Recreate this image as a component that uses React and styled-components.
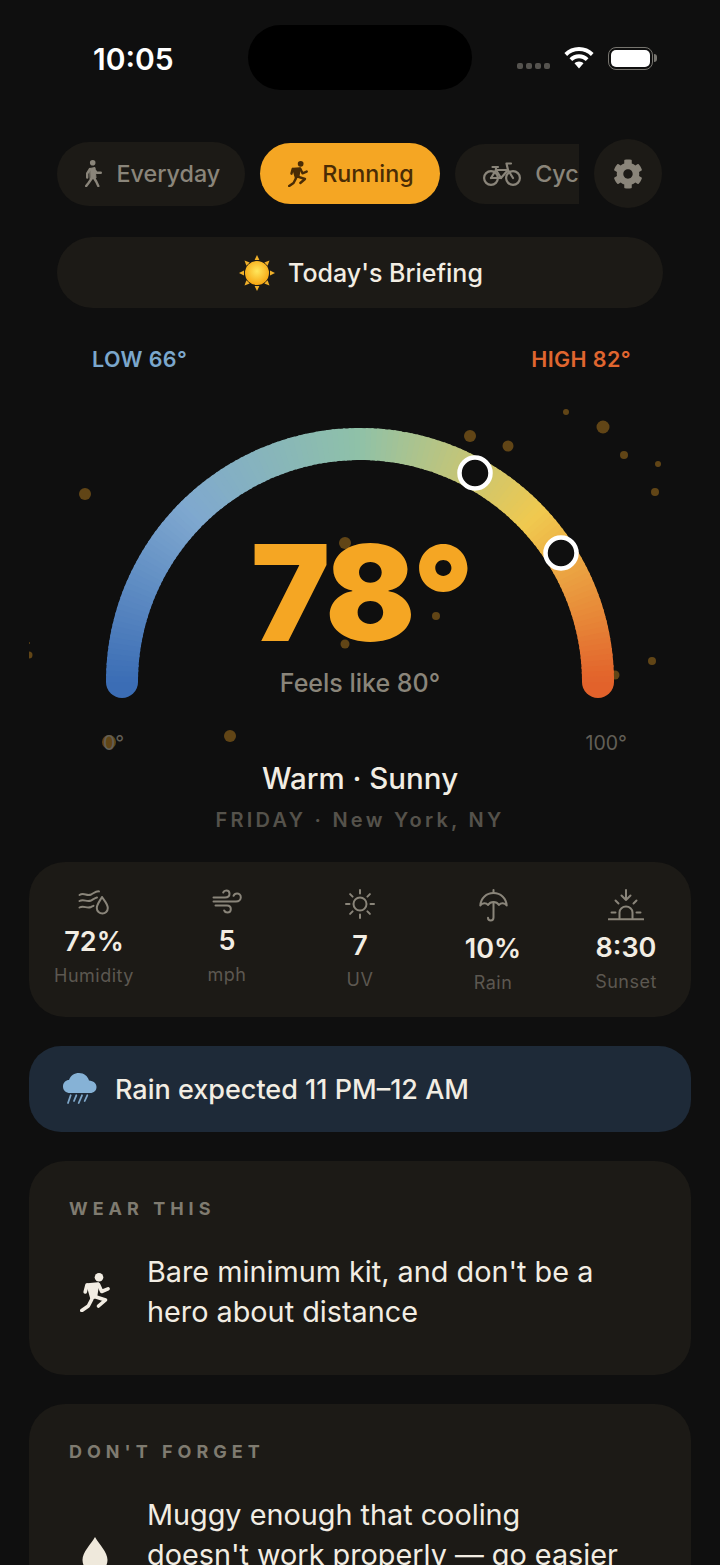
import React from "react";
import styled, { createGlobalStyle } from "styled-components";
import { FaCog } from "react-icons/fa";

const CREAM = "#f2ede3";
const CARD = "#1c1a16";
const MUTED = "#8a857a";
const AMBER = "#f5a623";

const GlobalStyle = createGlobalStyle`
  html, body {
    margin: 0;
    padding: 0;
    background: #0f0f0f;
  }
  body {
    width: 720px;
    height: 1565px;
    overflow: hidden;
    font-family: Inter, "Liberation Sans", sans-serif;
    color: ${CREAM};
  }
`;

// gauge colours from the left end to the right end of the arc
const STOPS = [
  [0, [59, 109, 181]],
  [0.25, [127, 168, 207]],
  [0.5, [143, 193, 168]],
  [0.76, [240, 201, 79]],
  [1, [226, 98, 43]],
];

const colourAt = (t) => {
  let i = 0;
  while (i < STOPS.length - 2 && t > STOPS[i + 1][0]) i++;
  const [t0, c0] = STOPS[i];
  const [t1, c1] = STOPS[i + 1];
  const k = (t - t0) / (t1 - t0);
  const mix = c0.map((c, n) => Math.round(c + (c1[n] - c) * k));
  return `rgb(${mix.join(",")})`;
};

const CX = 360;
const CY = 682;
const R = 238;

const pointAt = (t) => {
  const a = Math.PI * (1 - t);
  return [CX + R * Math.cos(a), CY - R * Math.sin(a)];
};

const SEGMENTS = Array.from({ length: 140 }, (_, i) => {
  const t0 = i / 140;
  const t1 = Math.min(1, (i + 1.4) / 140);
  const [x0, y0] = pointAt(t0);
  const [x1, y1] = pointAt(t1);
  return {
    d: `M${x0} ${y0}A${R} ${R} 0 0 1 ${x1} ${y1}`,
    colour: colourAt((t0 + t1) / 2),
  };
});

const SPECKS = [
  [470, 436, 6], [508, 446, 5.5], [566, 412, 3], [603, 427, 6.5], [624, 455, 4],
  [658, 464, 3], [655, 492, 4], [85, 494, 6], [345, 543, 6], [436, 616, 4],
  [345, 644, 4.5], [652, 661, 4], [615, 675, 4.5], [230, 736, 6], [109, 742, 7],
  [29, 655, 3.5], [29, 643, 1],
];

const Gauge = () => (
  <GaugeSvg viewBox="29 395 662 372" width="662" height="372">
    {SPECKS.map(([x, y, r]) => (
      <circle key={`${x}-${y}`} cx={x} cy={y} r={r} fill={AMBER} opacity="0.36" />
    ))}
    <circle cx={CX - R} cy={CY} r="16" fill={colourAt(0)} />
    <circle cx={CX + R} cy={CY} r="16" fill={colourAt(1)} />
    {SEGMENTS.map((s) => (
      <path key={s.d} d={s.d} fill="none" stroke={s.colour} strokeWidth="32" />
    ))}
    <circle cx="475" cy="473" r="15.5" fill="#0f0f0f" stroke="#fff" strokeWidth="4.5" />
    <circle cx="561" cy="553" r="15.5" fill="#0f0f0f" stroke="#fff" strokeWidth="4.5" />
  </GaugeSvg>
);

const WalkIcon = () => (
  <svg width="17" height="27" viewBox="0 0 17 27" fill="none" stroke="currentColor" strokeWidth="2.4" strokeLinecap="round" strokeLinejoin="round">
    <circle cx="7.7" cy="2.8" r="2.8" fill="currentColor" stroke="none" />
    <path d="M5 8.500L10 7.500L11 18L5.500 19Z" fill="currentColor" strokeWidth="1" />
    <path d="M10.500 11L11.500 12.700H15.800" />
    <path d="M5 9L2.200 13.500V17.500" />
    <path d="M7 18L3.500 23L1.200 26" />
    <path d="M9 18L11.200 21.500L13.300 26" />
  </svg>
);

const RunIcon = ({ size = 39 }) => (
  <svg width={(size * 30) / 39} height={size} viewBox="0 0 30 39" fill="none" stroke="currentColor" strokeWidth="3.6" strokeLinecap="round" strokeLinejoin="round">
    <circle cx="19" cy="4.300" r="4.300" fill="currentColor" stroke="none" />
    <path d="M7.500 11.500L18 10.500L16 23.500L11.500 25.500Z" fill="currentColor" strokeWidth="2.500" />
    <path d="M7 12L5.200 19" />
    <path d="M18.500 11.500L21.700 18.500L28 15.800" />
    <path d="M14.500 23.500L25.500 27L18.500 33" />
    <path d="M11.700 26.500L8.300 33L1.800 37.500" />
  </svg>
);

const BikeIcon = () => (
  <svg width="38" height="24" viewBox="0 0 38 24" fill="none" stroke="currentColor" strokeWidth="2.2" strokeLinecap="round" strokeLinejoin="round">
    <circle cx="8" cy="16" r="6.900" />
    <circle cx="30" cy="16" r="6.900" />
    <path d="M8 16L13 8H25L30 16" />
    <path d="M8 16H18L25 8" />
    <path d="M13 8L18 16" />
    <path d="M9.500 5H15" />
    <path d="M13 5.500V8" />
    <path d="M25 8L23.500 1.500H28" />
  </svg>
);

const BriefingSun = () => (
  <svg width="36" height="36" viewBox="0 0 36 36">
    <defs>
      <radialGradient id="sunFill" cx="50%" cy="42%" r="62%">
        <stop offset="0%" stopColor="#ffe75c" />
        <stop offset="100%" stopColor="#f6a10c" />
      </radialGradient>
    </defs>
    <g fill="#f0b02a">
      <path d="M18 0L20.400 5H15.600Z" />
      <path d="M18 36L20.400 31H15.600Z" />
      <path d="M0 18L5 15.600V20.400Z" />
      <path d="M36 18L31 15.600V20.400Z" />
      <path d="M5.500 5.500L10.700 7.400L7.400 10.700Z" />
      <path d="M30.500 5.500L25.300 7.400L28.600 10.700Z" />
      <path d="M5.500 30.500L10.700 28.600L7.400 25.300Z" />
      <path d="M30.500 30.500L25.300 28.600L28.600 25.300Z" />
    </g>
    <circle cx="18" cy="18" r="12" fill="url(#sunFill)" />
  </svg>
);

const HumidityIcon = () => (
  <MetricSvg width="32" height="26" viewBox="0 0 32 26">
    <path d="M1.500 6C6 3 8.500 7.500 13 5.500C16 4 18 2 21 2.400" />
    <path d="M1.500 12C6 9.500 8.500 13.500 13 11.500C15 10.500 17 9 19 8.500" />
    <path d="M1.500 18.500C6 16 8.500 20 13 18C14 17.500 14.500 17.300 15.500 16.800" />
    <path d="M24 8C26.500 12 29.800 15 29.800 19C29.800 22.300 27.200 24.500 24.500 24.500C21.500 24.500 18.800 22.300 18.800 19C18.800 15 22 12 24 8Z" />
  </MetricSvg>
);

const WindIcon = () => (
  <MetricSvg width="30" height="25" viewBox="0 0 30 25">
    <path d="M1.500 8.500H13C15.800 8.500 17.500 6.800 17.500 4.800C17.500 2.800 16 1.500 14.300 1.500C12.800 1.500 11.700 2.300 11.200 3.500" />
    <path d="M1.500 12.500H24C27 12.500 28.800 10.500 28.800 8.300C28.800 6 27 4.500 25 4.500C23.300 4.500 22 5.500 21.500 6.800" />
    <path d="M3.500 16.500H15C17.500 16.500 18.800 18 18.800 20C18.800 22 17.300 23.500 15.300 23.500C13.800 23.500 12.700 22.700 12.200 21.500" />
  </MetricSvg>
);

const SunIcon = () => (
  <MetricSvg width="30" height="30" viewBox="0 0 30 30">
    <circle cx="15" cy="15" r="6.500" />
    <path d="M15 1V4.500M15 25.500V29M1 15H4.500M25.500 15H29M5.100 5.100L7.600 7.600M22.400 22.400L24.900 24.900M5.100 24.900L7.600 22.400M22.400 7.600L24.900 5.100" />
  </MetricSvg>
);

const UmbrellaIcon = () => (
  <MetricSvg width="29" height="33" viewBox="0 0 29 33">
    <path d="M14.500 1V4" />
    <path d="M1.300 16.500C1.800 9 7.500 4 14.500 4C21.500 4 27.200 9 27.700 16.500C25.800 13.500 21.800 13.500 20 16C18.500 13.700 16.500 13 14.500 13C12.500 13 10.500 13.700 9 16C7.200 13.500 3.200 13.500 1.300 16.500Z" />
    <path d="M14.500 13V28.500C14.500 30.500 13.200 31.600 11.700 31.600C10.200 31.600 9 30.500 9 28.800" />
  </MetricSvg>
);

const SunsetIcon = () => (
  <MetricSvg width="36" height="32" viewBox="0 0 36 32">
    <path d="M18 1V11M13.500 6.500L18 11L22.500 6.500" />
    <path d="M7.500 11.500L10.500 14.500M28.500 11.500L25.500 14.500" />
    <path d="M3.500 23.500H7.500M28.500 23.500H32.500" />
    <path d="M11.500 29.500V23.500C11.500 20 14.500 17.500 18 17.500C21.500 17.500 24.500 20 24.500 23.500V29.500" />
    <path d="M0.500 30.300H35.500" />
  </MetricSvg>
);

const RainCloud = () => (
  <svg width="34" height="32" viewBox="0 0 34 32">
    <path d="M7 20C3 20 0 17.500 0 13.500C0 9.500 3 7 6 7C7.500 2.500 11.500 0 16 0C21 0 25 3.500 26 7.500C30.500 7.800 33.500 10.500 33.500 14C33.500 17.500 31 20 27 20Z" fill="#86b2d6" />
    <path d="M7.700 22.300L5 30M13.300 22.300L11 28M19 22.300L15.700 30M24.300 22.300L21.700 28" stroke="#7ea6c8" strokeWidth="1.800" strokeLinecap="round" fill="none" />
  </svg>
);

const DropIcon = () => (
  <svg width="26" height="36" viewBox="0 0 26 36">
    <path d="M13 0C17 7 25.500 15 25.500 23C25.500 30 20 36 13 36C6 36 0.500 30 0.500 23C0.500 15 9 7 13 0Z" fill="#efe9dc" />
  </svg>
);

const METRICS = [
  { icon: <HumidityIcon />, value: "72%", label: "Humidity" },
  { icon: <WindIcon />, value: "5", label: "mph" },
  { icon: <SunIcon />, value: "7", label: "UV" },
  { icon: <UmbrellaIcon />, value: "10%", label: "Rain" },
  { icon: <SunsetIcon />, value: "8:30", label: "Sunset" },
];

const App = () => {
  return (
    <Page>
      <GlobalStyle />

      {/* phone status bar */}
      <StatusBar>
        <Clock>10:05</Clock>
        <Island />
        <StatusIcons>
          <SignalDots>
            <i /><i /><i /><i />
          </SignalDots>
          <svg width="30" height="22" viewBox="0 0 30 22" fill="#fff">
            <path d="M15 0C9.300 0 4.200 2.300 0.400 6L3.100 8.900C6.200 5.900 10.400 4 15 4C19.600 4 23.800 5.900 26.900 8.900L29.600 6C25.800 2.300 20.700 0 15 0Z" />
            <path d="M15 7.300C11.300 7.300 8 8.800 5.500 11.200L8.200 14C10 12.300 12.400 11.200 15 11.200C17.600 11.200 20 12.300 21.800 14L24.500 11.200C22 8.800 18.700 7.300 15 7.300Z" />
            <path d="M15 14.500C13.300 14.500 11.700 15.200 10.500 16.300L15 21.500L19.500 16.300C18.300 15.200 16.700 14.500 15 14.500Z" />
          </svg>
          <Battery>
            <BatteryFill />
          </Battery>
        </StatusIcons>
      </StatusBar>

      {/* activity tabs */}
      <TabRow>
        <Tabs>
          <Tab $height={64}>
            <WalkIcon />
            Everyday
          </Tab>
          <Tab $height={61} $active>
            <RunIcon size={26} />
            Running
          </Tab>
          <Tab $height={60}>
            <BikeIcon />
            Cycling
          </Tab>
        </Tabs>
        <GearButton>
          <FaCog size={30} />
        </GearButton>
      </TabRow>

      <Briefing>
        <BriefingSun />
        Today's Briefing
      </Briefing>

      <HiLo>
        <HiLoLabel $colour="#7ba7cc">LOW 66°</HiLoLabel>
        <HiLoLabel $colour="#e0662f">HIGH 82°</HiLoLabel>
      </HiLo>

      {/* temperature gauge */}
      <GaugeWrap>
        <Gauge />
        <Temp>78°</Temp>
        <FeelsLike>Feels like 80°</FeelsLike>
        <ScaleRow>
          <span>0°</span>
          <span>100°</span>
        </ScaleRow>
      </GaugeWrap>

      <Condition>Warm · Sunny</Condition>
      <Place>FRIDAY · New York, NY</Place>

      <MetricCard>
        {METRICS.map((m) => (
          <Metric key={m.label}>
            {m.icon}
            <MetricValue>{m.value}</MetricValue>
            <MetricLabel>{m.label}</MetricLabel>
          </Metric>
        ))}
      </MetricCard>

      <RainBanner>
        <RainCloud />
        Rain expected 11 PM–12 AM
      </RainBanner>

      <AdviceCard>
        <AdviceTitle>WEAR THIS</AdviceTitle>
        <AdviceRow>
          <AdviceIcon>
            <RunIcon />
          </AdviceIcon>
          <AdviceText>Bare minimum kit, and don't be a hero about distance</AdviceText>
        </AdviceRow>
      </AdviceCard>

      <AdviceCard>
        <AdviceTitle>DON'T FORGET</AdviceTitle>
        <AdviceRow $minHeight={120}>
          <AdviceIcon>
            <DropIcon />
          </AdviceIcon>
          <AdviceText>Muggy enough that cooling doesn't work properly — go easier</AdviceText>
        </AdviceRow>
      </AdviceCard>
    </Page>
  );
};

const Page = styled.div`
  width: 720px;
  height: 1565px;
  overflow: hidden;
  box-sizing: border-box;
  padding: 0 29px;
  background: #0f0f0f;
`;

const StatusBar = styled.div`
  position: relative;
  height: 139px;
  display: flex;
  justify-content: space-between;
  align-items: flex-start;
  padding: 41px 38px 0 64px;
  box-sizing: border-box;
`;

const Clock = styled.div`
  font-size: 30px;
  font-weight: 600;
  line-height: 36px;
  color: #fff;
`;

const Island = styled.div`
  position: absolute;
  left: 219px;
  top: 25px;
  width: 224px;
  height: 65px;
  border-radius: 33px;
  background: #000;
`;

const StatusIcons = styled.div`
  display: flex;
  align-items: center;
  gap: 14px;
  height: 34px;
`;

const SignalDots = styled.div`
  display: flex;
  gap: 3px;
  margin-top: 16px;

  i {
    width: 6px;
    height: 6px;
    border-radius: 2px;
    background: #55534f;
  }
`;

const Battery = styled.div`
  position: relative;
  width: 45px;
  height: 23px;
  box-sizing: border-box;
  border: 1.5px solid #77756f;
  border-radius: 8px;
  padding: 2px;

  &::after {
    content: "";
    position: absolute;
    right: -5px;
    top: 6px;
    width: 3px;
    height: 8px;
    border-radius: 0 3px 3px 0;
    background: #77756f;
  }
`;

const BatteryFill = styled.div`
  width: 100%;
  height: 100%;
  border-radius: 5px;
  background: #fff;
`;

const TabRow = styled.div`
  display: flex;
  align-items: center;
  justify-content: space-between;
  margin: 0 29px 0 28px;
  height: 69px;
`;

const Tabs = styled.div`
  width: 522px;
  display: flex;
  align-items: center;
  gap: 14.5px;
  overflow: hidden;
`;

const Tab = styled.div`
  flex: none;
  height: ${(p) => p.$height}px;
  box-sizing: border-box;
  display: flex;
  align-items: center;
  gap: 14.5px;
  padding: 0 ${(p) => (p.$active ? 26.5 : 25)}px 0 28px;
  border-radius: 32px;
  font-size: 23.3px;
  font-weight: 500;
  background: ${(p) => (p.$active ? AMBER : CARD)};
  color: ${(p) => (p.$active ? "#4a2c05" : MUTED)};
`;

const GearButton = styled.div`
  width: 68px;
  height: 69px;
  border-radius: 50%;
  background: ${CARD};
  color: ${MUTED};
  display: flex;
  align-items: center;
  justify-content: center;
`;

const Briefing = styled.div`
  margin: 29px 28px 0;
  height: 71px;
  box-sizing: border-box;
  padding-left: 2px;
  border-radius: 36px;
  background: ${CARD};
  display: flex;
  align-items: center;
  justify-content: center;
  gap: 13px;
  font-size: 25px;
  font-weight: 500;
`;

const HiLo = styled.div`
  margin: 39px 60px 0 63px;
  display: flex;
  justify-content: space-between;
  height: 24px;
`;

const HiLoLabel = styled.div`
  font-size: 21.5px;
  font-weight: 600;
  line-height: 24px;
  letter-spacing: 0.4px;
  color: ${(p) => p.$colour};
`;

const GaugeWrap = styled.div`
  position: relative;
  margin-top: 24px;
  height: 372px;
  display: flex;
  flex-direction: column;
  align-items: center;
`;

const GaugeSvg = styled.svg`
  position: absolute;
  left: 0;
  top: 0;
`;

const Temp = styled.div`
  position: relative;
  margin: 133px 0 0 2px;
  font-size: 133px;
  font-weight: 900;
  line-height: 130px;
  letter-spacing: -3px;
  color: ${AMBER};
`;

const FeelsLike = styled.div`
  position: relative;
  margin-top: 10px;
  font-size: 25px;
  font-weight: 500;
  line-height: 30px;
  color: ${MUTED};
`;

const ScaleRow = styled.div`
  position: relative;
  align-self: stretch;
  margin: 34px 64px 0 74px;
  display: flex;
  justify-content: space-between;
  font-size: 19.5px;
  line-height: 22px;
  color: #625f57;
`;

const Condition = styled.div`
  margin-top: -7px;
  text-align: center;
  font-size: 29.5px;
  font-weight: 500;
  line-height: 36px;
`;

const Place = styled.div`
  margin-top: 12px;
  text-align: center;
  font-size: 20px;
  font-weight: 600;
  line-height: 24px;
  letter-spacing: 3.25px;
  color: #55524b;
`;

const MetricCard = styled.div`
  margin-top: 30px;
  height: 155px;
  box-sizing: border-box;
  padding-top: 27px;
  border-radius: 36px;
  background: ${CARD};
  display: grid;
  grid-template-columns: repeat(5, 133px);
  justify-content: center;
`;

const MetricSvg = styled.svg`
  fill: none;
  stroke: ${MUTED};
  stroke-width: 2;
  stroke-linecap: round;
  stroke-linejoin: round;
`;

const Metric = styled.div`
  display: flex;
  flex-direction: column;
  align-items: center;
`;

const MetricValue = styled.div`
  margin-top: 11px;
  font-size: 27px;
  font-weight: 600;
  line-height: 32px;
`;

const MetricLabel = styled.div`
  margin-top: 8px;
  font-size: 18px;
  line-height: 20px;
  letter-spacing: 0.5px;
  color: #5c5851;
`;

const RainBanner = styled.div`
  margin-top: 29px;
  height: 86px;
  box-sizing: border-box;
  padding: 0 34px;
  border-radius: 32px;
  background: #1e2a38;
  display: flex;
  align-items: center;
  gap: 18px;
  font-size: 27px;
  font-weight: 500;
`;

const AdviceCard = styled.div`
  margin-top: 29px;
  padding: 37px 40px 43px;
  border-radius: 36px;
  background: ${CARD};
`;

const AdviceTitle = styled.div`
  font-size: 18px;
  font-weight: 700;
  line-height: 22px;
  letter-spacing: 5px;
  color: #7f7b70;
`;

const AdviceRow = styled.div`
  margin-top: 32px;
  min-height: ${(p) => p.$minHeight || 0}px;
  display: flex;
  align-items: center;
  gap: 26px;
`;

const AdviceIcon = styled.div`
  flex: none;
  width: 52px;
  display: flex;
  justify-content: center;
  color: ${CREAM};
`;

const AdviceText = styled.div`
  align-self: flex-start;
  max-width: 475px;
  font-size: 28.8px;
  line-height: 40px;
  color: ${CREAM};
`;

export default App;
